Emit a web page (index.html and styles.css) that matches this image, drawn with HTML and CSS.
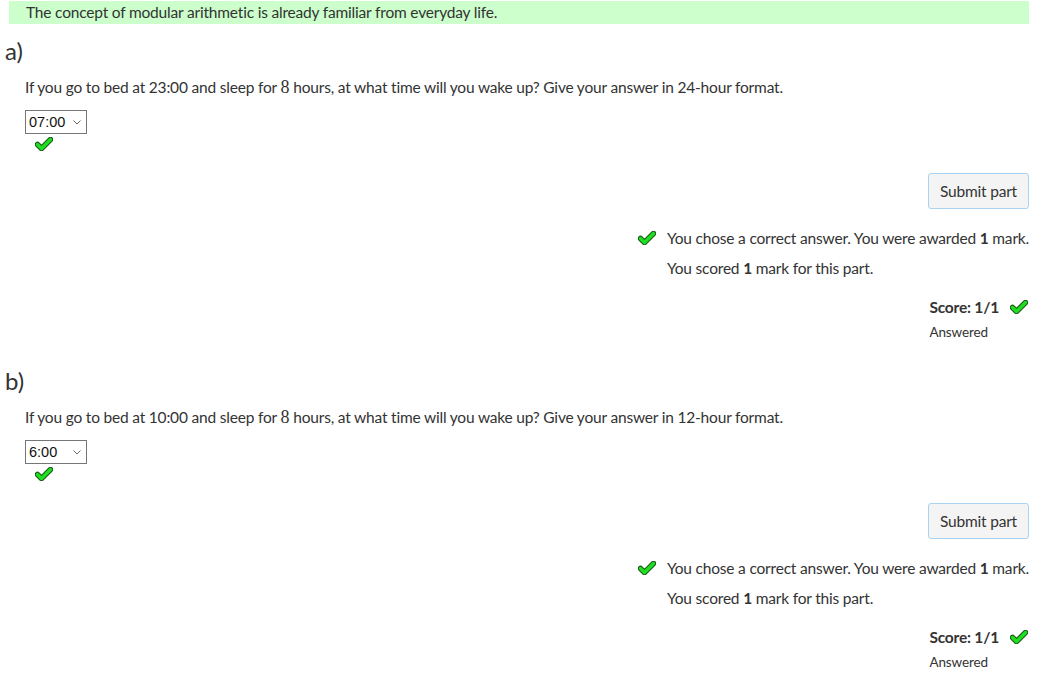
FILE: index.html
```html
<!DOCTYPE html>
<html lang="en">
<head>
<meta charset="utf-8">
<title>Modular arithmetic</title>
<link rel="stylesheet" href="styles.css">
</head>
<body>
<div class="banner">The concept of modular arithmetic is already familiar from everyday life.</div>

<section class="part">
  <h3 class="part-name">a)</h3>
  <p class="prompt">If you go to bed at 23:00 and sleep for <span class="math">8</span> hours, at what time will you wake up? Give your answer in 24-hour format.</p>
  <div class="answer">
    <span class="select-wrap">
      <select class="choice">
        <option>07:00</option>
        <option>06:00</option>
        <option>08:00</option>
        <option>31:00</option>
      </select>
      <svg class="chevron" viewBox="0 0 8 5" aria-hidden="true"><polyline points="0.5,0.5 4,4 7.5,0.5"/></svg>
    </span>
    <svg class="tick tick-small" viewBox="0 0 18 14" aria-hidden="true"><polyline points="2.5,7.5 6.5,11.5 15.5,2.5" class="tick-outline"/><polyline points="2.5,7.5 6.5,11.5 15.5,2.5" class="tick-fill"/></svg>
  </div>
  <div class="actions">
    <button class="submit">Submit part</button>
    <div class="feedback">
      <div class="fb-row"><svg class="tick" viewBox="0 0 18 14" aria-hidden="true"><polyline points="2.5,7.5 6.5,11.5 15.5,2.5" class="tick-outline"/><polyline points="2.5,7.5 6.5,11.5 15.5,2.5" class="tick-fill"/></svg><span>You chose a correct answer. You were awarded <b>1</b> mark.</span></div>
      <div class="fb-row"><span class="fb-gap"></span><span>You scored <b>1</b> mark for this part.</span></div>
    </div>
    <div class="score">
      <div class="score-row"><b>Score: 1/1</b><svg class="tick" viewBox="0 0 18 14" aria-hidden="true"><polyline points="2.5,7.5 6.5,11.5 15.5,2.5" class="tick-outline"/><polyline points="2.5,7.5 6.5,11.5 15.5,2.5" class="tick-fill"/></svg></div>
      <div class="status">Answered</div>
    </div>
  </div>
</section>

<section class="part">
  <h3 class="part-name">b)</h3>
  <p class="prompt">If you go to bed at 10:00 and sleep for <span class="math">8</span> hours, at what time will you wake up? Give your answer in 12-hour format.</p>
  <div class="answer">
    <span class="select-wrap">
      <select class="choice">
        <option>6:00</option>
        <option>18:00</option>
        <option>2:00</option>
        <option>7:00</option>
      </select>
      <svg class="chevron" viewBox="0 0 8 5" aria-hidden="true"><polyline points="0.5,0.5 4,4 7.5,0.5"/></svg>
    </span>
    <svg class="tick tick-small" viewBox="0 0 18 14" aria-hidden="true"><polyline points="2.5,7.5 6.5,11.5 15.5,2.5" class="tick-outline"/><polyline points="2.5,7.5 6.5,11.5 15.5,2.5" class="tick-fill"/></svg>
  </div>
  <div class="actions">
    <button class="submit">Submit part</button>
    <div class="feedback">
      <div class="fb-row"><svg class="tick" viewBox="0 0 18 14" aria-hidden="true"><polyline points="2.5,7.5 6.5,11.5 15.5,2.5" class="tick-outline"/><polyline points="2.5,7.5 6.5,11.5 15.5,2.5" class="tick-fill"/></svg><span>You chose a correct answer. You were awarded <b>1</b> mark.</span></div>
      <div class="fb-row"><span class="fb-gap"></span><span>You scored <b>1</b> mark for this part.</span></div>
    </div>
    <div class="score">
      <div class="score-row"><b>Score: 1/1</b><svg class="tick" viewBox="0 0 18 14" aria-hidden="true"><polyline points="2.5,7.5 6.5,11.5 15.5,2.5" class="tick-outline"/><polyline points="2.5,7.5 6.5,11.5 15.5,2.5" class="tick-fill"/></svg></div>
      <div class="status">Answered</div>
    </div>
  </div>
</section>
</body>
</html>
```

FILE: styles.css
```css
body {
  margin: 0;
  font-family: Lato, "Noto Sans", sans-serif;
  font-size: 15.5px;
  letter-spacing: -0.19px;
  color: #333;
  background: #fff;
}

.banner {
  margin: 1px 21px 0 9px;
  padding: 0 17px;
  height: 23px;
  line-height: 23px;
  background: #ccffcc;
}

.part {
  padding: 12px 21px 0 0;
}

.part + .part {
  padding-top: 24px;
}

.part-name {
  margin: 0 0 0 5px;
  height: 30px;
  line-height: 30px;
  font-size: 24px;
  font-weight: normal;
  letter-spacing: 0;
}

.prompt {
  margin: 9px 0 0 25px;
  line-height: 24px;
}

.math {
  font-family: "Liberation Serif", serif;
  font-size: 18px;
  letter-spacing: 0;
}

.answer {
  margin: 11px 0 0 25px;
  display: flex;
  flex-direction: column;
  align-items: flex-start;
}

.select-wrap {
  position: relative;
  display: block;
  height: 24px;
}

.choice {
  display: block;
  width: 62px;
  height: 24px;
  margin: 0;
  padding: 0 0 0 3px;
  font-family: "Liberation Sans", Arial, sans-serif;
  font-size: 14.5px;
  letter-spacing: 0;
  color: #111;
  background: #fff;
  border: 1px solid #767676;
  border-radius: 0;
  appearance: none;
  -webkit-appearance: none;
}

.chevron {
  position: absolute;
  left: 48px;
  top: 10px;
  width: 8px;
  height: 5px;
  fill: none;
  stroke: #6a6a6a;
  stroke-width: 1;
  pointer-events: none;
}

.tick {
  width: 18px;
  height: 14px;
  flex: none;
}

.tick-small {
  margin: 3px 0 0 10px;
}

.tick-outline {
  fill: none;
  stroke: #1d5a1d;
  stroke-width: 5.5;
  stroke-linecap: round;
  stroke-linejoin: round;
}

.tick-fill {
  fill: none;
  stroke: #1ee01e;
  stroke-width: 3.3;
  stroke-linecap: round;
  stroke-linejoin: round;
}

.actions {
  margin-top: 22px;
  display: flex;
  flex-direction: column;
  align-items: flex-end;
}

.submit {
  height: 36px;
  padding: 0 11px;
  font-family: inherit;
  font-size: 15.5px;
  letter-spacing: -0.19px;
  color: #333;
  background: #f4f4f4;
  border: 1px solid #a9d3f3;
  border-radius: 3px;
}

.feedback {
  margin-top: 14px;
}

.fb-row {
  display: flex;
  align-items: center;
  gap: 11px;
  line-height: 30px;
}

.fb-gap {
  width: 18px;
}

.score {
  margin-top: 12px;
  margin-right: 1px;
}

.score-row {
  display: flex;
  align-items: center;
  gap: 11px;
  line-height: 24px;
}

.status {
  margin-top: 3px;
  line-height: 20px;
  font-size: 13.5px;
  letter-spacing: -0.1px;
}
```
